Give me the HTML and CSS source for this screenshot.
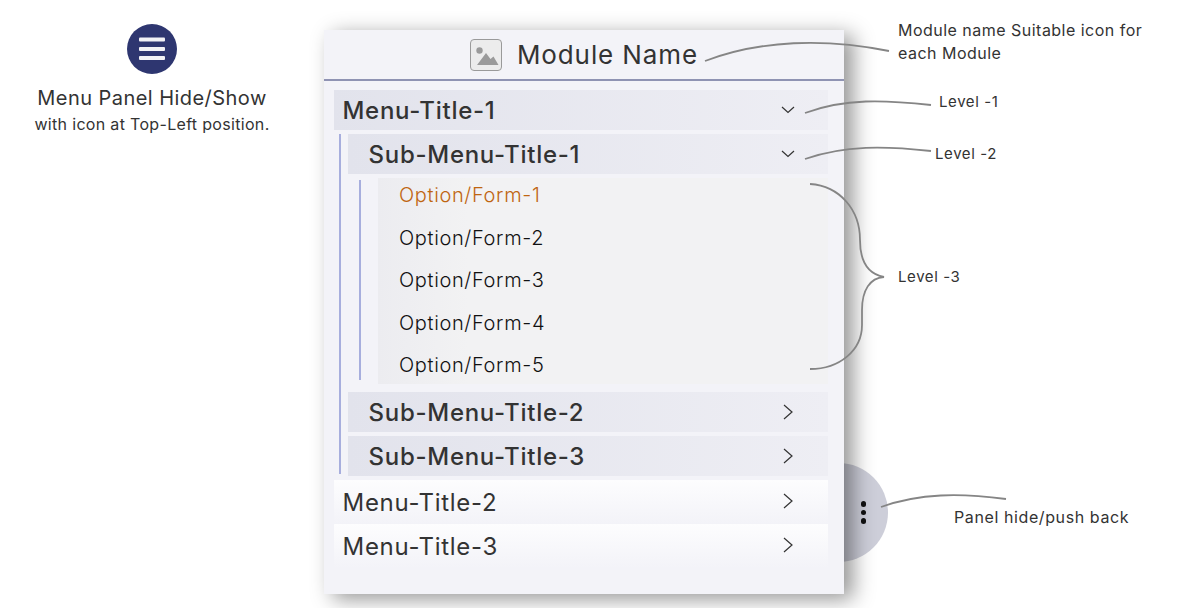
FILE: index.html
```html
<!DOCTYPE html>
<html lang="en">
<head>
<meta charset="utf-8">
<title>Menu panel annotations</title>
<link rel="stylesheet" href="styles.css">
</head>
<body>
<div class="stage">
  <section class="intro">
    <svg class="burger" viewBox="0 0 50 50" width="50" height="50" aria-hidden="true">
      <circle cx="25" cy="25" r="25" fill="#2e3670"/>
      <rect x="12" y="13.5" width="26" height="4" rx="1" fill="#f2f2f6"/>
      <rect x="12" y="23" width="26" height="4" rx="1" fill="#f2f2f6"/>
      <rect x="12" y="32" width="26" height="4" rx="1" fill="#f2f2f6"/>
    </svg>
    <h2 class="intro-title">Menu Panel Hide/Show</h2>
    <p class="intro-sub">with icon at Top-Left position.</p>
  </section>

  <div class="handle">
    <span class="dot"></span><span class="dot"></span><span class="dot"></span>
  </div>

  <aside class="panel">
    <header class="panel-head">
      <svg class="module-icon" viewBox="0 0 32 32" width="32" height="32" aria-hidden="true">
        <rect x="0.5" y="0.5" width="31" height="31" rx="3.5" fill="#ececec" stroke="#9a9a9a"/>
        <circle cx="9.5" cy="11.5" r="3.2" fill="#9a9a9a"/>
        <path d="M7 26 L16 14 L20.5 20 L23.5 17.5 L28.5 26 Z" fill="#9a9a9a"/>
      </svg>
      <h1 class="module-name">Module Name</h1>
    </header>

    <nav class="menu">
      <div class="row row-l1">
        <span class="label">Menu-Title-1</span>
        <svg class="chev" viewBox="0 0 16 16" width="16" height="16"><path d="M2 5 L8 10.5 L14 5" /></svg>
      </div>
      <div class="level2">
        <div class="row row-l2">
          <span class="label">Sub-Menu-Title-1</span>
          <svg class="chev" viewBox="0 0 16 16" width="16" height="16"><path d="M2 5 L8 10.5 L14 5" /></svg>
        </div>
        <div class="level3">
          <ul class="options">
            <li class="option is-active">Option/Form-1</li>
            <li class="option">Option/Form-2</li>
            <li class="option">Option/Form-3</li>
            <li class="option">Option/Form-4</li>
            <li class="option">Option/Form-5</li>
          </ul>
        </div>
        <div class="row row-l2 row-gap">
          <span class="label">Sub-Menu-Title-2</span>
          <svg class="chev" viewBox="0 0 16 16" width="16" height="16"><path d="M4 1 L12 8 L4 15" /></svg>
        </div>
        <div class="row row-l2">
          <span class="label">Sub-Menu-Title-3</span>
          <svg class="chev" viewBox="0 0 16 16" width="16" height="16"><path d="M4 1 L12 8 L4 15" /></svg>
        </div>
      </div>
      <div class="row row-closed">
        <span class="label">Menu-Title-2</span>
        <svg class="chev chev-up" viewBox="0 0 16 16" width="16" height="16"><path d="M4 1 L12 8 L4 15" /></svg>
      </div>
      <div class="row row-closed">
        <span class="label">Menu-Title-3</span>
        <svg class="chev chev-up" viewBox="0 0 16 16" width="16" height="16"><path d="M4 1 L12 8 L4 15" /></svg>
      </div>
    </nav>
  </aside>

  <svg class="leaders" viewBox="0 0 1180 608" width="1180" height="608" aria-hidden="true">
    <path d="M705 61 C760 40 825 38 889 51"/>
    <path d="M805 113 C845 98 885 100 931 105"/>
    <path d="M805 159 C845 145 885 146 931 151"/>
    <path d="M810 184 C840 186 860 210 860 240 C860 262 868 274 884 277 C870 278 862 290 862 310 L862 325 C862 350 840 369 810 369"/>
    <path d="M881 507 C920 493 960 493 1006 499"/>
  </svg>

  <p class="note note-module">Module name Suitable icon for<br>each Module</p>
  <p class="note note-level note-l1">Level -1</p>
  <p class="note note-level note-l2">Level -2</p>
  <p class="note note-level note-l3">Level -3</p>
  <p class="note note-handle">Panel hide/push back</p>
</div>
</body>
</html>
```

FILE: styles.css
```css
* { box-sizing: border-box; }
html, body { margin: 0; padding: 0; background: #fff; }
body { font-family: Inter, "Liberation Sans", sans-serif; color: #333; }

.stage {
  position: relative;
  width: 1180px;
  height: 608px;
  overflow: hidden;
  display: flex;
  align-items: flex-start;
}

.intro {
  width: 304px;
  padding-top: 24px;
  display: flex;
  flex-direction: column;
  align-items: center;
}
.burger { display: block; }
.intro-title {
  margin: 11px 0 0;
  font-size: 20px;
  line-height: 26px;
  font-weight: 400;
  letter-spacing: 0.45px;
}
.intro-sub {
  margin: 1px 0 0;
  font-size: 16px;
  line-height: 24px;
  letter-spacing: 0.32px;
}

.panel {
  position: relative;
  z-index: 2;
  width: 520px;
  height: 564px;
  margin: 30px 0 0 20px;
  background: #f3f3f8;
  box-shadow: 9px 5px 20px rgba(0, 0, 0, 0.42);
}
.panel-head {
  height: 51px;
  border-bottom: 2px solid #8f93b3;
  display: flex;
  align-items: center;
  justify-content: center;
  gap: 15px;
}
.module-icon { display: block; }
.module-name {
  margin: 0;
  font-size: 26px;
  font-weight: 400;
  letter-spacing: 0.9px;
}

.menu {
  display: flex;
  flex-direction: column;
  padding: 9px 16px 0 10px;
}
.row {
  height: 40px;
  display: flex;
  align-items: center;
  justify-content: space-between;
  padding-right: 32px;
  font-size: 24px;
  letter-spacing: 0.72px;
}
.row-l1 {
  background: linear-gradient(90deg, #e2e3ec, #eeeef4);
  padding-left: 8.5px;
  margin-bottom: 4px;
  font-weight: 500;
}
.row-l2 {
  background: linear-gradient(90deg, #e2e3ec, #eeeef4);
  padding-left: 20.5px;
  font-weight: 500;
}
.row-closed {
  height: 44px;
  background: linear-gradient(180deg, #fdfdfe, #f3f3f8);
  padding-left: 8.5px;
  font-weight: 400;
}
.chev { display: block; fill: none; stroke: #333; stroke-width: 1.2; }
.chev-up { margin-bottom: 2px; }

.level2 {
  margin: 0 0 6px 5px;
  border-left: 2px solid #a7aedd;
  padding-left: 7px;
  display: flex;
  flex-direction: column;
  gap: 4px;
}
.level2 .row-l2:last-child { margin-bottom: -2px; }
.row-gap { margin-top: 4px; }

.level3 {
  position: relative;
  padding-left: 30px;
}
.level3::before {
  content: "";
  position: absolute;
  left: 11px;
  top: 2px;
  bottom: 4px;
  width: 2px;
  background: #a7aedd;
}
.options {
  list-style: none;
  margin: 0;
  padding: 0;
  height: 206px;
  display: flex;
  flex-direction: column;
  gap: 8.5px;
  background: linear-gradient(90deg, #ececf0, #f2f2f3 20%);
}
.option {
  height: 34px;
  padding-left: 21px;
  display: flex;
  align-items: center;
  font-size: 20px;
  font-weight: 300;
  letter-spacing: 0.65px;
  color: #111;
}
.option.is-active { color: #bf6510; }

.handle {
  position: absolute;
  z-index: 1;
  left: 789px;
  top: 463px;
  width: 99px;
  height: 99px;
  border-radius: 50%;
  background: #cdced9;
  display: flex;
  flex-direction: column;
  align-items: flex-end;
  justify-content: center;
  gap: 3px;
  padding-right: 22px;
}
.dot { width: 5.5px; height: 5.5px; border-radius: 50%; background: #111; }

.leaders {
  position: absolute;
  z-index: 3;
  left: 0;
  top: 0;
  pointer-events: none;
}
.leaders path { fill: none; stroke: #858585; stroke-width: 1.8; }

.note {
  position: absolute;
  z-index: 3;
  margin: 0;
  font-size: 16px;
  line-height: 23px;
  letter-spacing: 0.48px;
  color: #333;
  white-space: nowrap;
}
.note-level { font-size: 15px; letter-spacing: 0.6px; }
.note-module { left: 898px; top: 19px; }
.note-l1 { left: 939px; top: 90px; }
.note-l2 { left: 935px; top: 142px; }
.note-l3 { left: 898px; top: 265px; }
.note-handle { left: 954px; top: 506px; letter-spacing: 0.6px; }
```
